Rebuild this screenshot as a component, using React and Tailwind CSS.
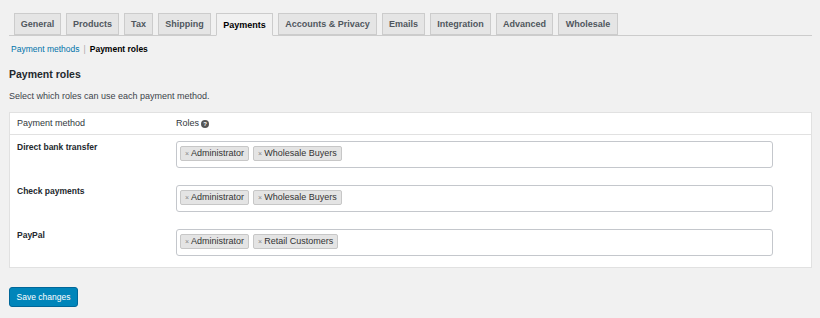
import React from "react";

const tabs = [
  { label: "General", w: 47 },
  { label: "Products", w: 53 },
  { label: "Tax", w: 29 },
  { label: "Shipping", w: 53 },
  { label: "Payments", w: 57, active: true },
  { label: "Accounts & Privacy", w: 99 },
  { label: "Emails", w: 43 },
  { label: "Integration", w: 61 },
  { label: "Advanced", w: 57 },
  { label: "Wholesale", w: 60 },
];

const rows = [
  { name: "Direct bank transfer", roles: ["Administrator", "Wholesale Buyers"] },
  { name: "Check payments", roles: ["Administrator", "Wholesale Buyers"] },
  { name: "PayPal", roles: ["Administrator", "Retail Customers"] },
];

function Chip({ label }) {
  return (
    <span className="flex h-[15px] items-center gap-[2px] rounded-[2px] border border-[#c7c7c7] bg-[#e4e4e4] px-[4px] text-[9px] leading-none text-[#333]">
      <span className="text-[7px] text-[#888]">×</span>
      <span>{label}</span>
    </span>
  );
}

export default function App() {
  return (
    <div
      className="h-[318px] w-[820px] overflow-hidden bg-[#f1f1f1] text-[#23282d]"
      style={{ fontFamily: '"Liberation Sans", Arial, sans-serif' }}
    >
      <div className="ml-[9px] mr-[8px] flex gap-[5px] border-b border-[#ccc] pl-[5px] pt-[13px]">
        {tabs.map((t) => (
          <div
            key={t.label}
            style={{ width: t.w }}
            className={
              t.active
                ? "-mb-px flex h-[23px] items-center justify-center border border-[#ccc] border-b-[#f1f1f1] bg-[#f1f1f1] pt-[2px] text-[9px] font-bold text-[#000]"
                : "flex h-[22px] items-center justify-center border border-[#ccc] bg-[#e5e5e5] pt-[2px] text-[9px] font-bold text-[#50575e]"
            }
          >
            {t.label}
          </div>
        ))}
      </div>

      <div className="ml-[11px] mt-[7px] flex items-center text-[8.5px] leading-[12px]">
        <span className="text-[#0073aa]">Payment methods</span>
        <span className="mx-[4px] text-[#aaa]">|</span>
        <span className="font-bold text-[#000]">Payment roles</span>
      </div>

      <div className="ml-[9px] mt-[12px] text-[10.5px] font-bold leading-[14px] text-[#23282d]">
        Payment roles
      </div>

      <div className="ml-[9px] mt-[9px] text-[9px] leading-[12px] text-[#3c434a]">
        Select which roles can use each payment method.
      </div>

      <div className="ml-[9px] mt-[10px] w-[803px] border border-[#e1e1e1] bg-white pb-[11px]">
        <div className="flex h-[22px] items-center border-b border-[#e1e1e1] text-[9px] text-[#32373c]">
          <div className="w-[166px] pl-[7px]">Payment method</div>
          <div className="flex items-center gap-[2px]">
            Roles
            <span className="flex h-[8px] w-[8px] items-center justify-center rounded-full bg-[#555] text-[6px] font-bold leading-none text-white">
              ?
            </span>
          </div>
        </div>
        {rows.map((r, i) => (
          <div key={r.name} className={`flex ${i === 0 ? "pt-[6px]" : "pt-[17px]"}`}>
            <div className="w-[166px] pl-[7px] text-[8.5px] font-bold leading-[12px] text-[#23282d]">
              {r.name}
            </div>
            <div className="flex h-[27px] w-[597px] items-start gap-[4px] rounded-[3px] border border-[#c4c7cc] bg-white pl-[3px] pt-[4px]">
              {r.roles.map((role) => (
                <Chip key={role} label={role} />
              ))}
            </div>
          </div>
        ))}
      </div>

      <div className="ml-[9px] mt-[19px] flex h-[20px] w-[69px] items-center justify-center rounded-[3px] border border-[#006799] bg-[#0085ba] text-[8.5px] text-white">
        Save changes
      </div>
    </div>
  );
}
